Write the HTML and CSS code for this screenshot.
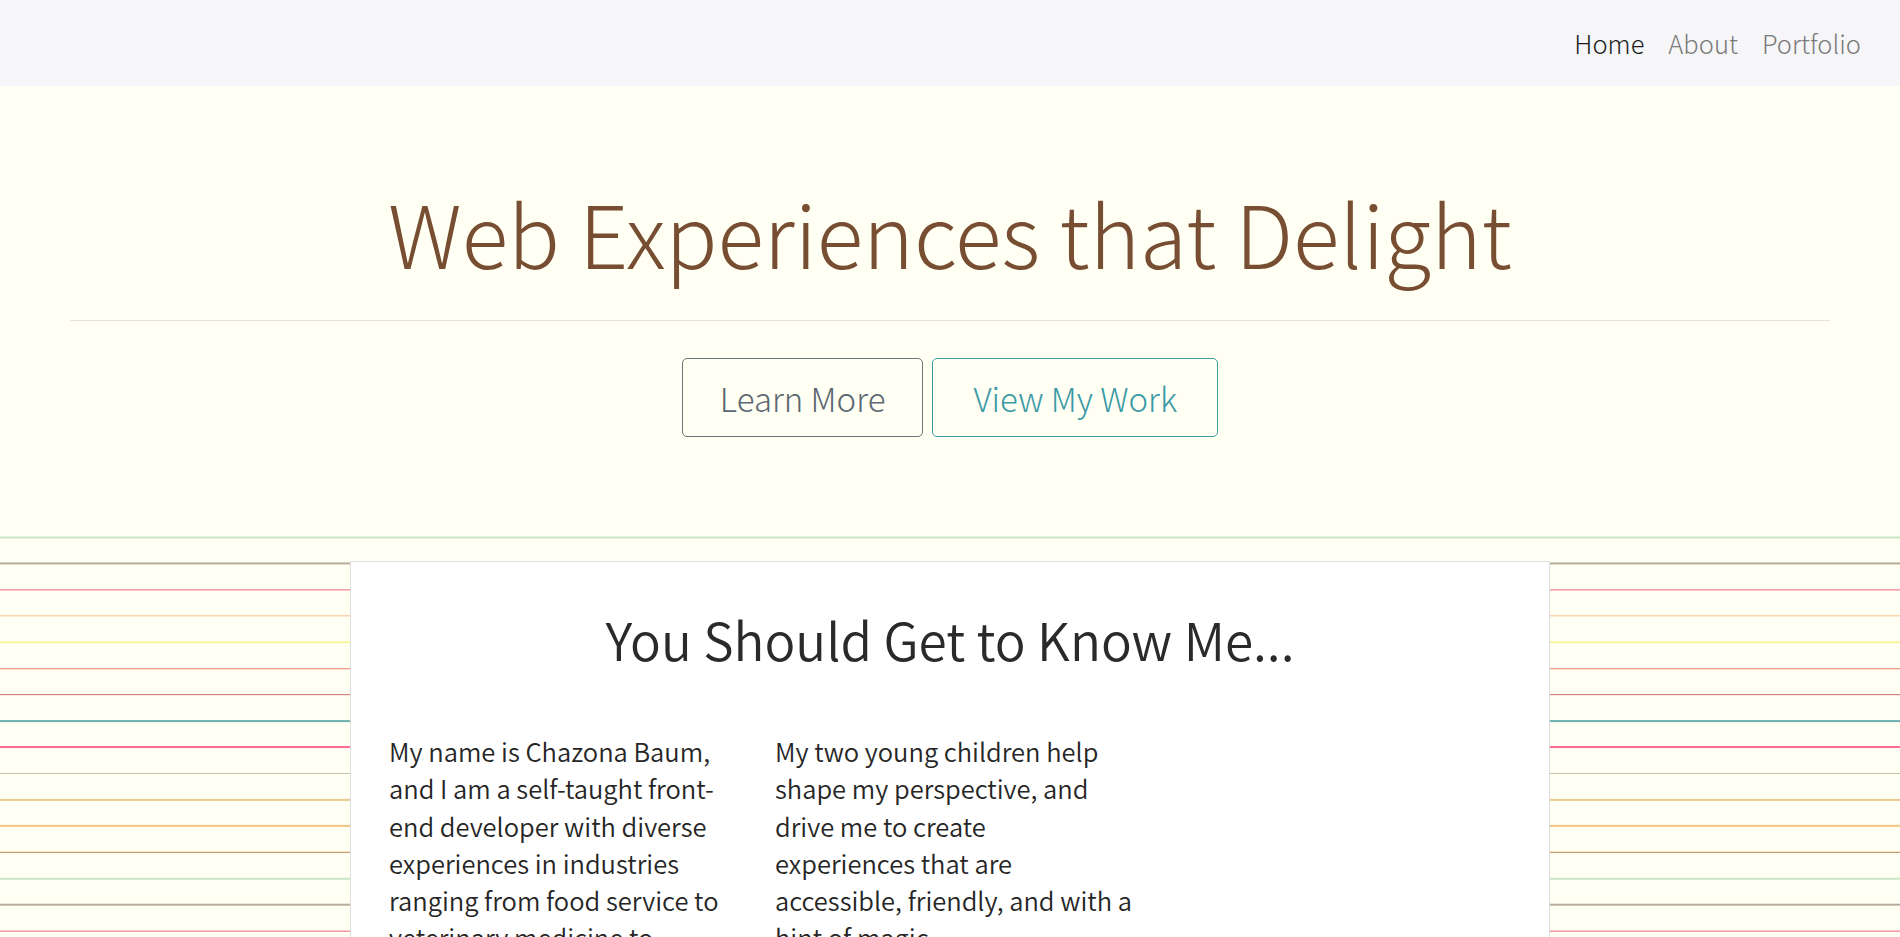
FILE: index.html
```html
<!DOCTYPE html>
<html lang="en">
<head>
<meta charset="utf-8">
<title>Chazona Baum</title>
<link rel="stylesheet" href="styles.css">
</head>
<body>
<nav class="navbar">
  <a class="nav-link active" href="#">Home</a>
  <a class="nav-link" href="#">About</a>
  <a class="nav-link" href="#">Portfolio</a>
</nav>
<header class="hero">
  <h1 class="hero-title">Web Experiences that Delight</h1>
  <hr class="hero-rule">
  <div class="hero-actions">
    <a class="btn btn-secondary" href="#">Learn More</a>
    <a class="btn btn-info" href="#">View My Work</a>
  </div>
</header>
<main class="ruled">
  <section class="card">
    <h2 class="card-title">You Should Get to Know Me...</h2>
    <div class="cols">
      <p class="col-text">My name is Chazona Baum, and I am a self-taught front-end developer with diverse experiences in industries ranging from food service to veterinary medicine to education.</p>
      <p class="col-text">My two young children help shape my perspective, and drive me to create<br>experiences that are accessible, friendly, and with a hint of magic.</p>
      <div class="col-text"></div>
    </div>
  </section>
</main>
</body>
</html>
```
FILE: styles.css
```css
* { box-sizing: border-box; }
html, body { margin: 0; padding: 0; }
body {
  font-family: "Noto Sans CJK KR", "Noto Sans", sans-serif;
  background: #fffff3;
  color: #222;
  overflow: hidden;
}
.navbar {
  height: 86px;
  background: #f6f6f8;
  display: flex;
  justify-content: flex-end;
  align-items: center;
  gap: 24px;
  padding: 0 39px 0 0;
}
.nav-link {
  font-size: 25.5px;
  font-weight: 300;
  color: #7a7a7a;
  text-decoration: none;
  line-height: 1;
}
.nav-link.active { color: #1d1d1d; }

.hero {
  height: 450px;
  background: #fffff3;
  padding: 91px 70px 0;
  text-align: center;
}
.hero-title {
  margin: 0;
  font-size: 86px;
  font-weight: 300;
  line-height: 110px;
  color: #774e32;
}
.hero-rule {
  margin: 33px 0 0;
  border: 0;
  border-top: 1px solid #e4e4da;
}
.hero-actions {
  margin-top: 37px;
  display: flex;
  justify-content: center;
  gap: 9px;
}
.btn {
  display: inline-block;
  font-size: 33px;
  font-weight: 300;
  line-height: 46px;
  padding: 15.5px 37px;
  border: 1px solid;
  border-radius: 5px;
  text-decoration: none;
  background: transparent;
}
.btn-info { padding-left: 40px; padding-right: 40px; }
.btn-secondary { color: #5b6772; border-color: #6c747b; }
.btn-info { color: #3a9aa6; border-color: #3f9ca7; }

.ruled {
  min-height: 401px;
  padding-top: 25px;
  background-color: #fffff3;
  background-image: linear-gradient(to bottom,
    #c9e7c3 0px, #c9e7c3 1.5px, transparent 1.5px, transparent 26.25px,
    #b6ab99 26.25px, #b6ab99 27.75px, transparent 27.75px, transparent 52.5px,
    #f1627a 52.5px, #f1627a 54px, transparent 54px, transparent 78.75px,
    #f7c08e 78.75px, #f7c08e 80.25px, transparent 80.25px, transparent 105px,
    #f8f39c 105px, #f8f39c 106.5px, transparent 106.5px, transparent 131.25px,
    #ef7f6d 131.25px, #ef7f6d 132.75px, transparent 132.75px, transparent 157.5px,
    #cf6a6b 157.5px, #cf6a6b 159px, transparent 159px, transparent 183.75px,
    #6aafae 183.75px, #6aafae 185.25px, transparent 185.25px, transparent 210px,
    #fd6a98 210px, #fd6a98 211.5px, transparent 211.5px, transparent 236.25px,
    #c2c4a1 236.25px, #c2c4a1 237.75px, transparent 237.75px, transparent 262.5px,
    #e9c990 262.5px, #e9c990 264px, transparent 264px, transparent 288.75px,
    #f3c47f 288.75px, #f3c47f 290.25px, transparent 290.25px, transparent 315px,
    #c0814d 315px, #c0814d 316.5px, transparent 316.5px, transparent 341.25px);
  background-size: 100% 341.25px;
  background-repeat: repeat-y;
  background-position: 0 0.5px;
}
.card {
  width: 1200px;
  margin: 0 auto;
  min-height: 376px;
  background: #fff;
  border: 1px solid #dedede;
  border-bottom: 0;
  padding: 42px 38px 0;
}
.card-title {
  margin: 0;
  text-align: center;
  font-size: 51.3px;
  font-weight: 350;
  line-height: 70px;
  color: #2a2a2a;
}
.cols {
  margin-top: 58px;
  display: grid;
  grid-template-columns: 365px 365px 1fr;
  column-gap: 21px;
}
.col-text {
  margin: 0;
  font-size: 25.5px;
  font-weight: 350;
  line-height: 37.3px;
  color: #262626;
}
```
